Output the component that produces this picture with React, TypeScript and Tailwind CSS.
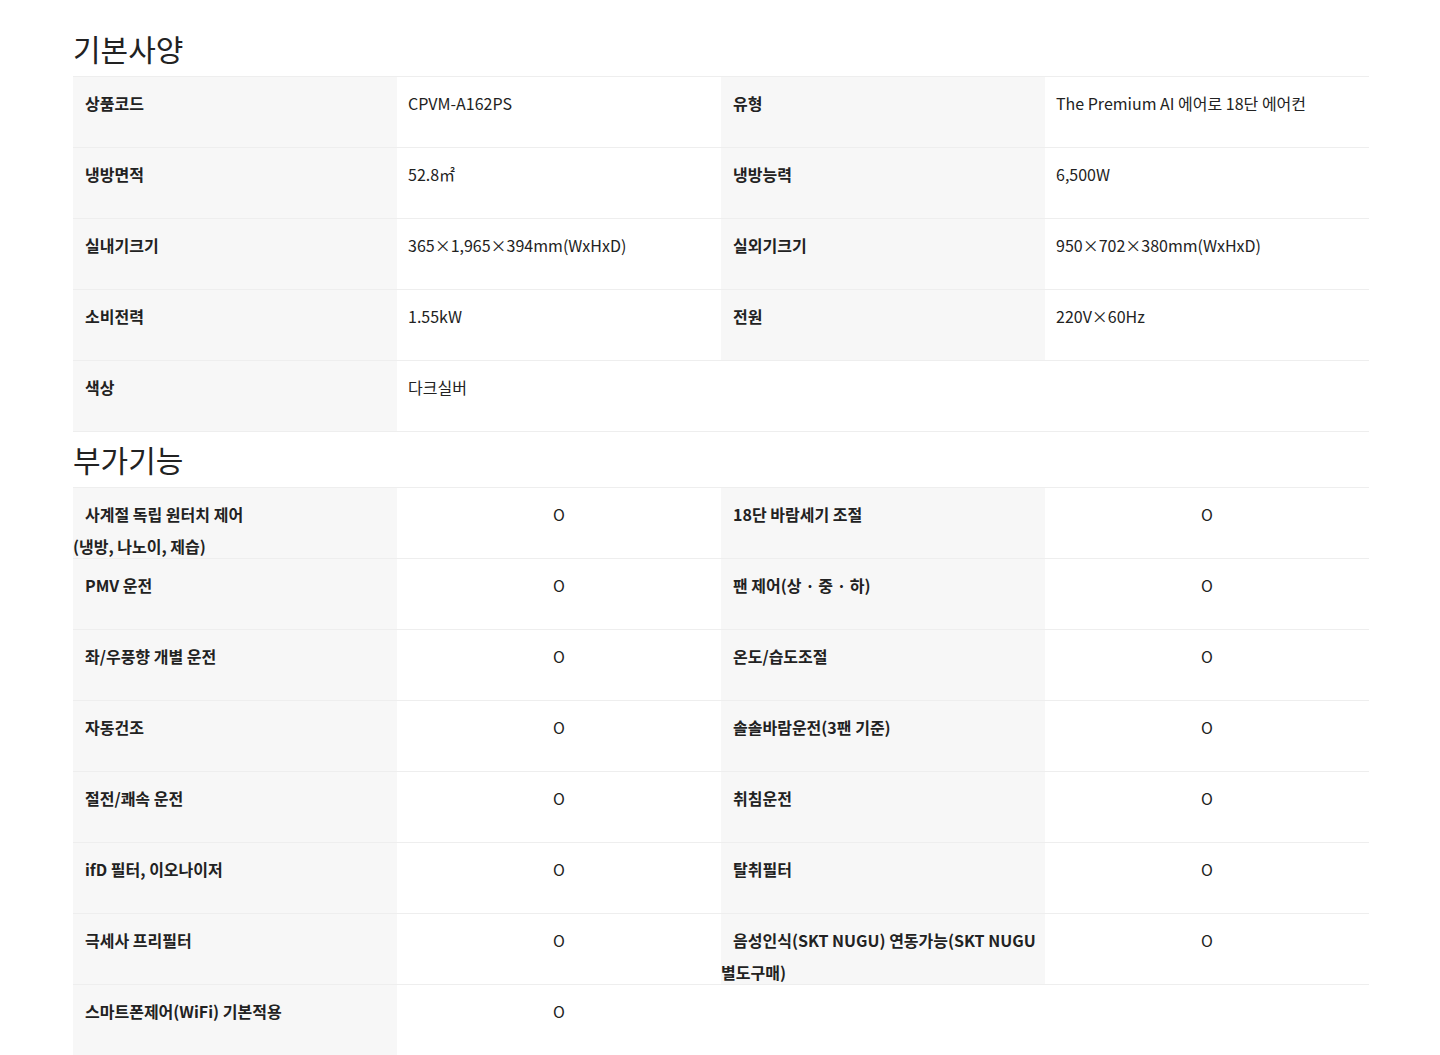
import React from 'react';

type Pair = { label: React.ReactNode; value?: React.ReactNode };

const BASIC: Pair[] = [
  { label: '상품코드', value: 'CPVM-A162PS' },
  { label: '유형', value: 'The Premium AI 에어로 18단 에어컨' },
  { label: '냉방면적', value: '52.8㎡' },
  { label: '냉방능력', value: '6,500W' },
  { label: '실내기크기', value: '365×1,965×394mm(WxHxD)' },
  { label: '실외기크기', value: '950×702×380mm(WxHxD)' },
  { label: '소비전력', value: '1.55kW' },
  { label: '전원', value: '220V×60Hz' },
  { label: '색상', value: '다크실버' },
];

const EXTRA: Pair[] = [
  { label: <>사계절 독립 원터치 제어<br />(냉방, 나노이, 제습)</>, value: 'O' },
  { label: '18단 바람세기 조절', value: 'O' },
  { label: 'PMV 운전', value: 'O' },
  { label: '팬 제어(상 · 중 · 하)', value: 'O' },
  { label: '좌/우풍향 개별 운전', value: 'O' },
  { label: '온도/습도조절', value: 'O' },
  { label: '자동건조', value: 'O' },
  { label: '솔솔바람운전(3팬 기준)', value: 'O' },
  { label: '절전/쾌속 운전', value: 'O' },
  { label: '취침운전', value: 'O' },
  { label: 'ifD 필터, 이오나이저', value: 'O' },
  { label: '탈취필터', value: 'O' },
  { label: '극세사 프리필터', value: 'O' },
  { label: <>음성인식(SKT NUGU) 연동가능(SKT NUGU<br />별도구매)</>, value: 'O' },
  { label: '스마트폰제어(WiFi) 기본적용', value: 'O' },
];

const SpecTable: React.FC<{ items: Pair[]; center?: boolean }> = ({ items, center }) => {
  const rows: Pair[][] = [];
  for (let i = 0; i < items.length; i += 2) rows.push(items.slice(i, i + 2));

  return (
    <div className="border-t border-[#eeeeee]">
      {rows.map((row, ri) => (
        <div key={ri} className="grid grid-cols-4 border-b border-[#eeeeee]">
          {row.map((p, ci) => (
            <React.Fragment key={ci}>
              <div className="h-[70px] bg-[#f7f7f7] pt-[10px] indent-3 text-[16px] leading-8 font-bold text-[#222]">
                {p.label}
              </div>
              <div className={`h-[70px] pt-[10px] text-[16px] leading-8 text-[#222] ${center ? 'text-center' : 'pl-[11px]'}`}>
                {p.value}
              </div>
            </React.Fragment>
          ))}
        </div>
      ))}
    </div>
  );
};

const App: React.FC = () => {
  return (
    <div
      className="min-h-screen bg-white pt-5 pl-[73px]"
      style={{ fontFamily: '"Noto Sans CJK KR", "Noto Sans", sans-serif' }}
    >
      <div className="w-[1296px]">
        {/* 기본사양 */}
        <h2 className="h-[56px] text-[30px] leading-[56px] font-normal text-[#222]">기본사양</h2>
        <SpecTable items={BASIC} />

        {/* 부가기능 */}
        <h2 className="h-[55px] text-[30px] leading-[55px] font-normal text-[#222]">부가기능</h2>
        <SpecTable items={EXTRA} center />
      </div>
    </div>
  );
};

export default App;
